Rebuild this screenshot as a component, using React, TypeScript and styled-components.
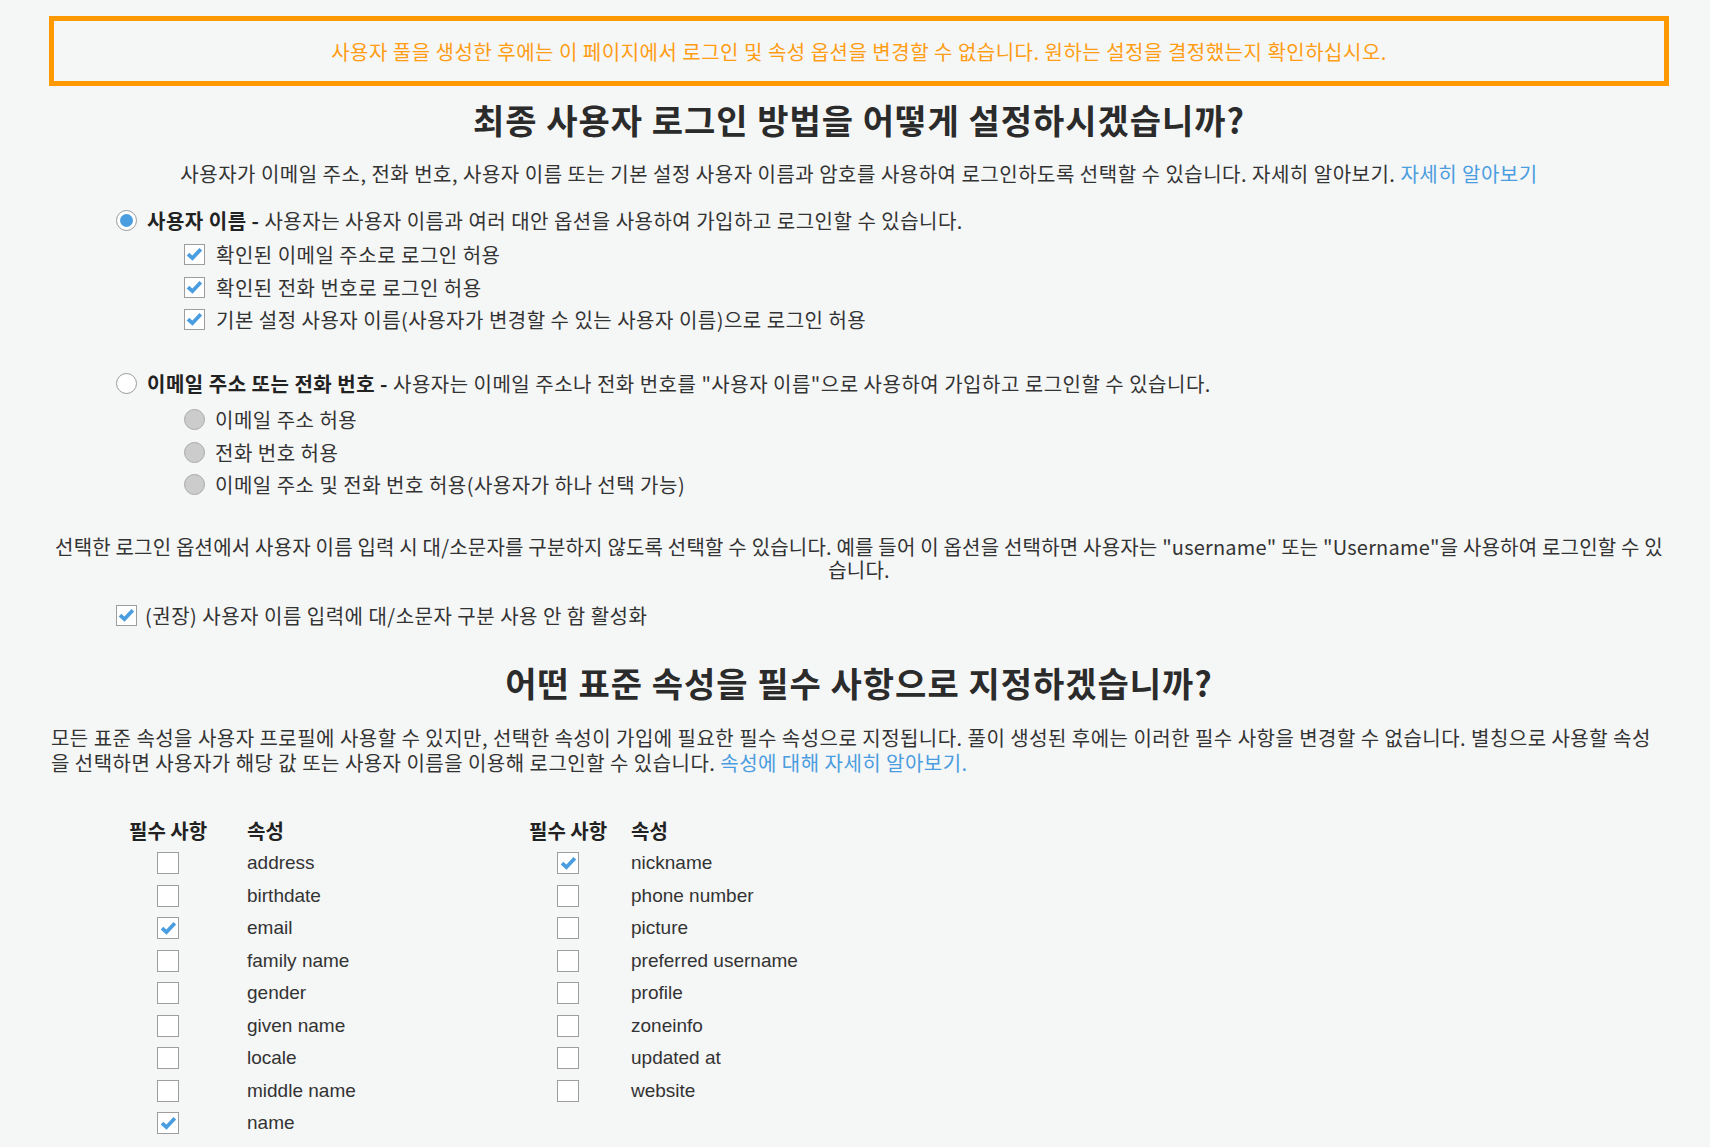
import { FC } from "react";
import styled, { createGlobalStyle } from "styled-components";

const GlobalStyle = createGlobalStyle`
  html, body {
    margin: 0;
    padding: 0;
    background-color: #f5f6f6;
  }
  body {
    font-family: "Noto Sans CJK KR", "Liberation Sans", sans-serif;
    color: #333333;
  }
`;

const Page = styled.div`
  padding: 16px 41px 0 49px;
`;

const Notice = styled.div`
  height: 60px;
  border: 5px solid #ff9900;
  display: flex;
  align-items: center;
  justify-content: center;
  color: #ff9d14;
  font-size: 20px;
  letter-spacing: 0.5px;
`;

const Heading = styled.h2<{ $top: number }>`
  margin: ${(p) => p.$top}px 0 0;
  font-size: 34px;
  font-weight: 700;
  letter-spacing: 1px;
  line-height: 40px;
  text-align: center;
  color: #2b2b2b;
`;

const Lead = styled.p`
  margin: 21px 0 0;
  font-size: 20px;
  letter-spacing: 0.5px;
  line-height: 26px;
  text-align: center;
`;

const Link = styled.a`
  color: #4a9ddf;
  text-decoration: none;
`;

const Options = styled.div<{ $indent: number; $top: number }>`
  display: flex;
  flex-direction: column;
  margin: ${(p) => p.$top}px 0 0 ${(p) => p.$indent}px;
`;

const OptionRow = styled.label<{ $gap?: number }>`
  display: flex;
  align-items: center;
  gap: ${(p) => p.$gap ?? 10}px;
  height: 32.5px;
  font-size: 20px;
  letter-spacing: 0.5px;
  white-space: nowrap;

  b {
    font-weight: 700;
    color: #222;
  }
`;

const Radio = styled.span<{ $state: "on" | "off" | "disabled" }>`
  box-sizing: border-box;
  width: 21px;
  height: 21px;
  flex: none;
  border-radius: 50%;
  border: 1px solid ${(p) => (p.$state === "disabled" ? "#a9a9a9" : "#9a9a9a")};
  background-color: ${(p) => (p.$state === "disabled" ? "#cccccc" : "#ffffff")};
  display: flex;
  align-items: center;
  justify-content: center;

  &::after {
    content: "";
    display: ${(p) => (p.$state === "on" ? "block" : "none")};
    width: 13px;
    height: 13px;
    border-radius: 50%;
    background-color: #4a9ddf;
  }
`;

const Box = styled.span<{ $size?: number }>`
  box-sizing: border-box;
  width: ${(p) => p.$size ?? 21}px;
  height: ${(p) => p.$size ?? 21}px;
  flex: none;
  border: 1px solid #9d9d9d;
  background-color: #ffffff;
  display: flex;
  align-items: center;
  justify-content: center;
`;

const Check: FC<{ checked: boolean; size?: number }> = ({ checked, size }) => (
  <Box $size={size}>
    {checked && (
      <svg width="19" height="19" viewBox="0 0 19 19" fill="none">
        <path
          d="M3 9.2L7.4 13.2L15.8 4.2"
          stroke="#4a9ddf"
          strokeWidth="3.8"
          strokeLinecap="butt"
          strokeLinejoin="miter"
        />
      </svg>
    )}
  </Box>
);

const Note = styled.p`
  margin: 34px 0 0;
  font-size: 20px;
  letter-spacing: 0.2px;
  line-height: 23px;
  text-align: center;
  white-space: nowrap;
`;

const Body = styled.p`
  margin: 22px 0 0 2px;
  font-size: 20px;
  letter-spacing: 0.47px;
  line-height: 25px;
  white-space: nowrap;
`;

const AttrTable = styled.div`
  display: grid;
  grid-template-columns: 118px 282px 102px 300px;
  grid-auto-flow: column;
  grid-template-rows: repeat(10, 32.5px);
  margin: 40px 0 0 80px;
`;

const HeadCell = styled.div`
  display: flex;
  align-items: center;
  font-size: 20px;
  font-weight: 700;
  color: #222;
  white-space: nowrap;
`;

const Column = styled.div`
  display: contents;
`;

const BoxCell = styled.div`
  display: flex;
  align-items: center;
  padding-left: 28px;
`;

const NameCell = styled.div`
  display: flex;
  align-items: center;
  font-family: "Liberation Sans", "Noto Sans CJK KR", sans-serif;
  font-size: 19px;
  color: #333;
  white-space: nowrap;
`;

const left: [string, boolean][] = [
  ["address", false],
  ["birthdate", false],
  ["email", true],
  ["family name", false],
  ["gender", false],
  ["given name", false],
  ["locale", false],
  ["middle name", false],
  ["name", true],
];

const right: [string, boolean][] = [
  ["nickname", true],
  ["phone number", false],
  ["picture", false],
  ["preferred username", false],
  ["profile", false],
  ["zoneinfo", false],
  ["updated at", false],
  ["website", false],
];

const AttrColumns: FC<{ rows: [string, boolean][] }> = ({ rows }) => (
  <Column>
    <HeadCell>필수 사항</HeadCell>
    {rows.map(([name, on]) => (
      <BoxCell key={name}>
        <Check checked={on} size={22} />
      </BoxCell>
    ))}
    {Array.from({ length: 9 - rows.length }).map((_, i) => (
      <BoxCell key={"pad" + i} />
    ))}
    <HeadCell>속성</HeadCell>
    {rows.map(([name]) => (
      <NameCell key={name}>{name}</NameCell>
    ))}
    {Array.from({ length: 9 - rows.length }).map((_, i) => (
      <NameCell key={"padn" + i} />
    ))}
  </Column>
);

const App: FC = () => {
  return (
    <>
      <GlobalStyle />
      <Page>
        <Notice>
          사용자 풀을 생성한 후에는 이 페이지에서 로그인 및 속성 옵션을 변경할 수 없습니다. 원하는 설정을 결정했는지 확인하십시오.
        </Notice>

        <Heading $top={14}>최종 사용자 로그인 방법을 어떻게 설정하시겠습니까?</Heading>
        <Lead>
          사용자가 이메일 주소, 전화 번호, 사용자 이름 또는 기본 설정 사용자 이름과 암호를 사용하여 로그인하도록 선택할 수 있습니다. 자세히 알아보기.{" "}
          <Link href="#">자세히 알아보기</Link>
        </Lead>

        <Options $indent={67} $top={17}>
          <OptionRow>
            <Radio $state="on" />
            <span>
              <b>사용자 이름 -</b> 사용자는 사용자 이름과 여러 대안 옵션을 사용하여 가입하고 로그인할 수 있습니다.
            </span>
          </OptionRow>
        </Options>
        <Options $indent={135} $top={2}>
          <OptionRow $gap={11}>
            <Check checked />
            확인된 이메일 주소로 로그인 허용
          </OptionRow>
          <OptionRow $gap={11}>
            <Check checked />
            확인된 전화 번호로 로그인 허용
          </OptionRow>
          <OptionRow $gap={11}>
            <Check checked />
            기본 설정 사용자 이름(사용자가 변경할 수 있는 사용자 이름)으로 로그인 허용
          </OptionRow>
        </Options>

        <Options $indent={67} $top={31}>
          <OptionRow>
            <Radio $state="off" />
            <span>
              <b>이메일 주소 또는 전화 번호 -</b> 사용자는 이메일 주소나 전화 번호를 "사용자 이름"으로 사용하여 가입하고 로그인할 수 있습니다.
            </span>
          </OptionRow>
        </Options>
        <Options $indent={135} $top={4}>
          <OptionRow>
            <Radio $state="disabled" />
            이메일 주소 허용
          </OptionRow>
          <OptionRow>
            <Radio $state="disabled" />
            전화 번호 허용
          </OptionRow>
          <OptionRow>
            <Radio $state="disabled" />
            이메일 주소 및 전화 번호 허용(사용자가 하나 선택 가능)
          </OptionRow>
        </Options>

        <Note>
          선택한 로그인 옵션에서 사용자 이름 입력 시 대/소문자를 구분하지 않도록 선택할 수 있습니다. 예를 들어 이 옵션을 선택하면 사용자는 "username" 또는 "Username"을 사용하여 로그인할 수 있
          <br />
          습니다.
        </Note>

        <Options $indent={67} $top={18}>
          <OptionRow $gap={8}>
            <Check checked />
            (권장) 사용자 이름 입력에 대/소문자 구분 사용 안 함 활성화
          </OptionRow>
        </Options>

        <Heading $top={31}>어떤 표준 속성을 필수 사항으로 지정하겠습니까?</Heading>
        <Body>
          모든 표준 속성을 사용자 프로필에 사용할 수 있지만, 선택한 속성이 가입에 필요한 필수 속성으로 지정됩니다. 풀이 생성된 후에는 이러한 필수 사항을 변경할 수 없습니다. 별칭으로 사용할 속성
          <br />
          을 선택하면 사용자가 해당 값 또는 사용자 이름을 이용해 로그인할 수 있습니다.{" "}
          <Link href="#">속성에 대해 자세히 알아보기.</Link>
        </Body>

        <AttrTable>
          <AttrColumns rows={left} />
          <AttrColumns rows={right} />
        </AttrTable>
      </Page>
    </>
  );
};

export default App;
